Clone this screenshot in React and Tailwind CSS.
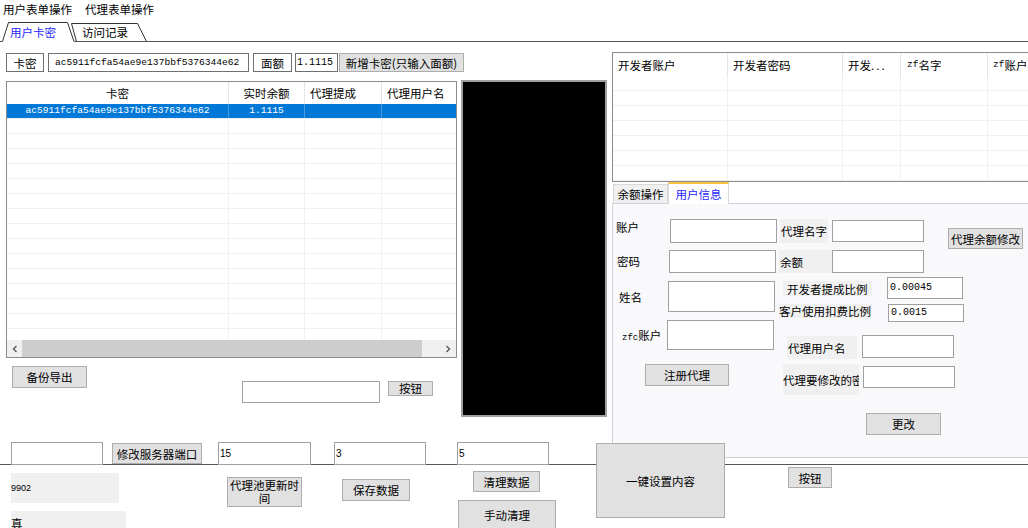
import React from "react";

const Btn = ({ className = "", children }) => (
  <div className={"flex shrink-0 items-center justify-center overflow-hidden bg-[#e1e1e1] border border-[#adadad] text-center " + className}>
    {children}
  </div>
);

const Inp = ({ className = "", children }) => (
  <div className={"flex shrink-0 items-center overflow-hidden bg-white border border-[#a0a0a0] " + className}>
    {children}
  </div>
);

const Lbl = ({ className = "", children }) => (
  <div className={"flex shrink-0 items-center overflow-hidden whitespace-nowrap bg-[#f0f0f0] " + className}>
    {children}
  </div>
);

const Mono = ({ className = "", children }) => (
  <span className={"font-['Liberation_Mono',monospace] " + className}>{children}</span>
);

const Chevron = ({ dir }) => (
  <svg width="8" height="8" viewBox="0 0 8 8">
    <polyline
      points={dir === "left" ? "5.5,1 2.5,4 5.5,7" : "2.5,1 5.5,4 2.5,7"}
      fill="none"
      stroke="#606060"
      strokeWidth="1.5"
    />
  </svg>
);

function LeftList() {
  const rows = Array.from({ length: 16 }, (_, i) => i);
  return (
    <div className="ml-[6px] mt-[9px] flex h-[277px] w-[451px] shrink-0 flex-col overflow-hidden border border-[#8c8c8c] bg-white">
      <div className="flex h-[22px] shrink-0">
        <div className="flex w-[222px] shrink-0 items-center justify-center border-r border-[#e5e5e5]">卡密</div>
        <div className="flex w-[76px] shrink-0 items-center justify-center border-r border-[#e5e5e5]">实时余额</div>
        <div className="flex w-[77px] shrink-0 items-center border-r border-[#e5e5e5] pl-[5px]">代理提成</div>
        <div className="flex w-[74px] shrink-0 items-center pl-[5px]">代理用户名</div>
      </div>
      <div className="flex-1 overflow-hidden">
        {rows.map((i) =>
          i === 0 ? (
            <div key={i} className="flex h-[15px] border-b border-[#f0f0f0] bg-[#0078d7] text-white">
              <div className="flex w-[222px] shrink-0 items-center justify-center border-r border-[#4a9be0]">
                <Mono className="text-[9.6px] leading-none">ac5911fcfa54ae9e137bbf5376344e62</Mono>
              </div>
              <div className="flex w-[76px] shrink-0 items-center justify-center border-r border-[#4a9be0]">
                <Mono className="text-[9.6px] leading-none">1.1115</Mono>
              </div>
              <div className="w-[77px] shrink-0 border-r border-[#4a9be0]" />
              <div className="w-[74px] shrink-0" />
            </div>
          ) : (
            <div key={i} className="flex h-[15px] border-b border-[#f0f0f0]">
              <div className="w-[222px] shrink-0 border-r border-[#f0f0f0]" />
              <div className="w-[76px] shrink-0 border-r border-[#f0f0f0]" />
              <div className="w-[77px] shrink-0 border-r border-[#f0f0f0]" />
              <div className="w-[74px] shrink-0" />
            </div>
          )
        )}
      </div>
      <div className="flex h-[17px] shrink-0 items-stretch bg-[#f0f0f0]">
        <div className="flex w-[15px] shrink-0 items-center justify-center">
          <Chevron dir="left" />
        </div>
        <div className="w-[400px] shrink-0 bg-[#cdcdcd]" />
        <div className="flex-1" />
        <div className="flex w-[17px] shrink-0 items-center justify-center">
          <Chevron dir="right" />
        </div>
      </div>
    </div>
  );
}

function RightList() {
  const rows = Array.from({ length: 7 }, (_, i) => i);
  return (
    <div className="mt-[10px] h-[130px] w-[420px] shrink-0 overflow-hidden border border-[#8c8c8c] bg-white">
      <div className="flex h-[23px]">
        <div className="flex w-[115px] shrink-0 items-center border-r border-[#e5e5e5] pl-[5px]">开发者账户</div>
        <div className="flex w-[115px] shrink-0 items-center border-r border-[#e5e5e5] pl-[5px]">开发者密码</div>
        <div className="flex w-[58px] shrink-0 items-center border-r border-[#e5e5e5] pl-[5px]">
          开发<span className="tracking-[2px]">...</span>
        </div>
        <div className="flex w-[87px] shrink-0 items-center border-r border-[#e5e5e5] pl-[6px]">
          <Mono className="text-[9.5px]">zf</Mono>名字
        </div>
        <div className="flex w-[60px] shrink-0 items-center pl-[5px]">
          <Mono className="text-[9.5px]">zf</Mono>账户
        </div>
      </div>
      {rows.map((i) => (
        <div key={i} className="flex h-[15px] border-b border-[#f0f0f0]">
          <div className="w-[115px] shrink-0 border-r border-[#f0f0f0]" />
          <div className="w-[115px] shrink-0 border-r border-[#f0f0f0]" />
          <div className="w-[58px] shrink-0 border-r border-[#f0f0f0]" />
          <div className="w-[87px] shrink-0 border-r border-[#f0f0f0]" />
          <div className="w-[60px] shrink-0" />
        </div>
      ))}
    </div>
  );
}

function UserInfoPage() {
  return (
    <div className="flex h-[255px] w-[420px] shrink-0 border border-r-0 border-[#ccd2da] bg-[#f9f9fb]">
      {/* column A */}
      <div className="flex w-[166px] shrink-0 flex-col">
        <div className="mt-[15px] flex h-[24px] items-start">
          <span className="ml-[3px] w-[54px] shrink-0">账户</span>
          <Inp className="h-[24px] w-[107px]" />
        </div>
        <div className="mt-[7px] flex h-[23px] items-start">
          <span className="ml-[4px] mt-[3px] w-[52px] shrink-0">密码</span>
          <Inp className="h-[23px] w-[107px]" />
        </div>
        <div className="mt-[8px] flex h-[31px] items-start">
          <span className="ml-[6px] mt-[8px] w-[49px] shrink-0">姓名</span>
          <Inp className="h-[31px] w-[107px]" />
        </div>
        <div className="mt-[8px] flex h-[30px] items-start">
          <span className="ml-[9px] mt-[7px] w-[45px] shrink-0 whitespace-nowrap">
            <Mono className="text-[9px]">zfc</Mono>账户
          </span>
          <Inp className="h-[30px] w-[107px]" />
        </div>
        <div className="mt-[14px] flex">
          <Btn className="ml-[32px] h-[22px] w-[84px]">注册代理</Btn>
        </div>
      </div>
      {/* column B */}
      <div className="flex flex-col">
        <div className="mt-[15px] flex h-[24px] items-start">
          <Lbl className="ml-[1px] h-[24px] w-[48px] pl-[1px]">代理名字</Lbl>
          <Inp className="ml-[4px] mt-[1px] h-[22px] w-[92px]" />
          <Btn className="ml-[24px] mt-[9px] h-[21px] w-[75px]">代理余额修改</Btn>
        </div>
        <div className="mt-[7px] flex h-[23px] items-start">
          <Lbl className="h-[23px] w-[53px] pl-[1px]">余额</Lbl>
          <Inp className="h-[23px] w-[92px]" />
        </div>
        <div className="mt-[4px] flex h-[22px] items-start">
          <Lbl className="ml-[4px] mt-[4px] h-[15px] w-[89px] pl-[4px]">开发者提成比例</Lbl>
          <Inp className="ml-[15px] h-[22px] w-[76px] pl-[2px]">
            <Mono className="text-[10px]">0.00045</Mono>
          </Inp>
        </div>
        <div className="mt-[5px] flex h-[18px] items-start">
          <Lbl className="h-[14px] w-[93px]">客户使用扣费比例</Lbl>
          <Inp className="ml-[16px] h-[18px] w-[76px] pl-[2px]">
            <Mono className="text-[10px]">0.0015</Mono>
          </Inp>
        </div>
        <div className="mt-[13px] flex h-[24px] items-start">
          <Lbl className="ml-[8px] mt-[1px] h-[23px] w-[70px] pl-[1px]">代理用户名</Lbl>
          <Inp className="ml-[5px] h-[23px] w-[92px]" />
        </div>
        <div className="mt-[5px] flex h-[31px] items-start">
          <Lbl className="ml-[4px] h-[31px] w-[76px]">代理要修改的密</Lbl>
          <Inp className="ml-[4px] mt-[2px] h-[22px] w-[92px]" />
        </div>
        <div className="mt-[18px] flex">
          <Btn className="ml-[87px] h-[22px] w-[75px]">更改</Btn>
        </div>
      </div>
    </div>
  );
}

export default function App() {
  return (
    <div className="relative h-[528px] w-[1028px] overflow-hidden bg-white font-['Noto_Sans_CJK_SC',sans-serif] text-[11.5px] leading-[16px] text-black">
      {/* menu bar */}
      <div className="flex h-[18px] items-center gap-[13px] pl-[3px] pt-[2px] leading-none">
        <span>用户表单操作</span>
        <span>代理表单操作</span>
      </div>

      {/* outer tab strip */}
      <div className="relative h-[24px]">
        <svg className="absolute left-0 top-0" width="1028" height="24" viewBox="0 0 1028 24">
          <path d="M0 23.5 H2.5" stroke="#555" fill="none" />
          <path d="M71.5 5.5 H137.5 L146.5 23.5" stroke="#333" fill="white" />
          <path d="M71.5 5.5 L76.5 23.5" stroke="#333" fill="none" />
          <path d="M2.5 23.5 L8.5 4.5 H67.5 L74 23.5" stroke="#333" fill="white" />
          <path d="M74 23.5 H1028" stroke="#555" fill="none" />
        </svg>
        <div className="relative flex h-full items-center pt-[6px] leading-none">
          <span className="ml-[10px] text-[#1f1fff]">用户卡密</span>
          <span className="ml-[26px]">访问记录</span>
        </div>
      </div>

      {/* main area */}
      <div className="flex h-[400px]">
        {/* left column */}
        <div className="flex w-[461px] shrink-0 flex-col">
          <div className="ml-[6px] mt-[11px] flex h-[19px] items-center">
            <div className="flex h-[19px] w-[38px] shrink-0 items-center justify-center border border-[#707070] bg-white">卡密</div>
            <div className="ml-[4px] flex h-[19px] w-[201px] shrink-0 items-center border border-[#707070] bg-white pl-[6px]">
              <Mono className="text-[9.6px] leading-none">ac5911fcfa54ae9e137bbf5376344e62</Mono>
            </div>
            <div className="ml-[4px] flex h-[19px] w-[39px] shrink-0 items-center justify-center border border-[#707070] bg-white">面额</div>
            <div className="ml-[3px] flex h-[19px] w-[43px] shrink-0 items-center border border-[#707070] bg-white pl-[1px]">
              <Mono className="text-[10px] leading-none">1.1115</Mono>
            </div>
            <Btn className="ml-[1px] h-[19px] w-[125px] whitespace-nowrap">新增卡密(只输入面额)</Btn>
          </div>
          <LeftList />
          <div className="mt-[8px] flex items-start">
            <Btn className="ml-[12px] h-[22px] w-[75px]">备份导出</Btn>
            <Inp className="ml-[155px] mt-[15px] h-[22px] w-[138px] border-[#8c8c8c]" />
            <Btn className="ml-[8px] mt-[15px] h-[15px] w-[45px] leading-none">按钮</Btn>
          </div>
        </div>

        {/* black panel */}
        <div className="mt-[38px] h-[337px] w-[146px] shrink-0 border-2 border-[#a0a0a0] bg-black" />

        {/* right column */}
        <div className="ml-[5px] flex w-[416px] shrink-0 flex-col">
          <RightList />
          <div className="flex h-[21px] shrink-0 items-end pl-[1px]">
            <div className="flex h-[19px] w-[55px] shrink-0 items-center justify-center border border-b-0 border-[#d9d9d9] bg-[#f0f0f0]">余额操作</div>
            <div className="relative z-10 mb-[-1px] flex h-[22px] w-[61px] shrink-0 items-center justify-center border-x border-t-2 border-x-[#d9d9d9] border-t-[#f5c242] bg-white text-[#1f1fff]">
              用户信息
            </div>
          </div>
          <UserInfoPage />
        </div>
      </div>

      {/* bottom area */}
      <div className="flex">
        <div className="flex w-[596px] shrink-0 flex-col">
          <div className="flex h-[23px] items-start border-b border-[#555]">
            <Inp className="ml-[11px] h-[23px] w-[92px]" />
            <Btn className="ml-[9px] mt-[1px] h-[21px] w-[90px] whitespace-nowrap">修改服务器端口</Btn>
            <Inp className="ml-[16px] h-[23px] w-[93px] pl-[1px]">
              <span className="font-['Liberation_Sans',sans-serif] text-[10px]">15</span>
            </Inp>
            <Inp className="ml-[23px] h-[23px] w-[92px] pl-[1px]">
              <span className="font-['Liberation_Sans',sans-serif] text-[10px]">3</span>
            </Inp>
            <Inp className="ml-[31px] h-[23px] w-[92px] pl-[1px]">
              <span className="font-['Liberation_Sans',sans-serif] text-[10px]">5</span>
            </Inp>
          </div>
          <div className="flex items-start">
            <div className="ml-[11px] flex w-[115px] shrink-0 flex-col">
              <Lbl className="mt-[8px] h-[30px] w-[108px]">
                <span className="font-['Liberation_Sans',sans-serif] text-[9px]">9902</span>
              </Lbl>
              <Lbl className="mt-[8px] h-[24px] w-[115px]">真</Lbl>
            </div>
            <Btn className="ml-[101px] mt-[12px] h-[30px] w-[75px] leading-[13px]">代理池更新时间</Btn>
            <Btn className="ml-[40px] mt-[14px] h-[22px] w-[68px]">保存数据</Btn>
            <div className="ml-[48px] flex flex-col">
              <Btn className="ml-[15px] mt-[6px] h-[21px] w-[67px]">清理数据</Btn>
              <Btn className="mt-[8px] h-[30px] w-[98px]">手动清理</Btn>
            </div>
          </div>
        </div>
        <Btn className="mt-[1px] h-[75px] w-[129px]">一键设置内容</Btn>
        <div className="flex flex-1 flex-col">
          <div className="h-[23px] border-b border-[#555]" />
          <div className="flex">
            <Btn className="ml-[63px] mt-[2px] h-[21px] w-[44px]">按钮</Btn>
          </div>
        </div>
      </div>
    </div>
  );
}
